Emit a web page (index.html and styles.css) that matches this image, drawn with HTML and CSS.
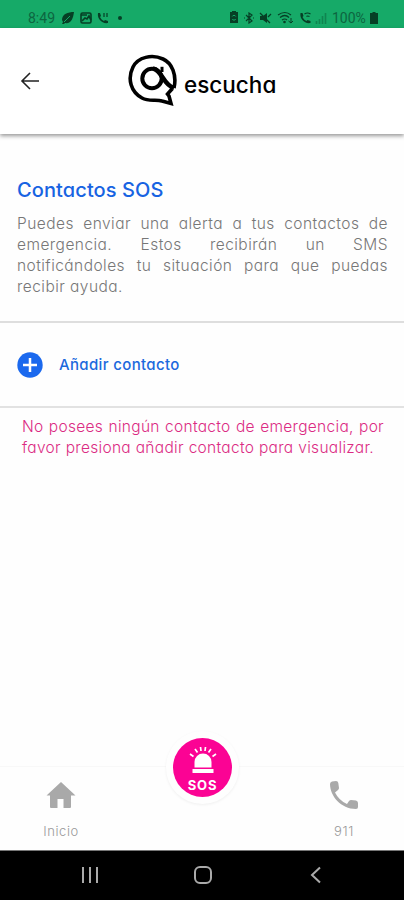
FILE: index.html
```html
<!DOCTYPE html>
<html lang="es">
<head>
  <meta charset="UTF-8">
  <meta name="viewport" content="width=device-width, initial-scale=1.0">
  <title>Contactos SOS</title>
  <link rel="stylesheet" href="styles.css">
</head>
<body>
  <div class="screen">
    <!-- Status bar -->
    <div class="status-bar">
      <div class="status-left">
        <span class="time">8:49</span>
        <svg width="14" height="14" viewBox="0 0 14 14"><path d="M13 1C7 1 1 3 1 9l1 2-1 2h2l1-1c6 1 8-4 9-11z" fill="currentColor"/><path d="M3 11L9 5" stroke="#13a866"/></svg>
        <svg width="12" height="12" viewBox="0 0 12 12"><rect x="1" y="1" width="10" height="10" rx="1.5" fill="none" stroke="currentColor" stroke-width="1.6"/><path d="M1 3h6M2 9l3-3 2 1 2-3 2 4" fill="none" stroke="currentColor" stroke-width="1.7"/></svg>
        <svg width="12" height="12" viewBox="0 0 12 12"><path d="M1 1h2l1 3-1 1c1 2 2 3 4 4l1-1 3 1v2C5 12 0 7 1 1z" fill="currentColor"/><path d="M7 1v4M10 1v4" stroke="currentColor" stroke-width="1.2"/></svg>
        <span class="dot"></span>
      </div>
      <div class="status-right">
        <svg width="10" height="13" viewBox="0 0 10 13"><path d="M3 0h4v1h2v11H1V1h2z" fill="currentColor"/><path d="M3.200 5.500a2 2 0 0 1 3.600 0M6.800 8a2 2 0 0 1-3.600 0" fill="none" stroke="#13a866"/></svg>
        <svg width="10" height="12" viewBox="0 0 10 12"><path d="M2 3l6 6-3 2V1l3 2-6 6M0 6h1M9 6h1" fill="none" stroke="currentColor" stroke-width="1.2"/></svg>
        <svg width="13" height="12" viewBox="0 0 13 12"><path d="M1 4h3l4-3v10L4 8H1z" fill="currentColor"/><path d="M1 1l10 10M9 5l3-3" stroke="currentColor" stroke-width="1.3"/></svg>
        <svg width="17" height="13" viewBox="0 0 17 13"><path d="M1 4q7-5 13 0M3 6.500q5-4 9 0M5 9q3-2 5 0" fill="none" stroke="currentColor" stroke-width="1.200"/><circle cx="7.500" cy="11" r="1.300" fill="currentColor"/><path d="M14 7v5M11.500 10l2.500 2 2-2" fill="none" stroke="currentColor"/></svg>
        <svg width="13" height="12" viewBox="0 0 12 12"><path d="M1 1h2l1 3-1 1c1 2 2 3 4 4l1-1 3 1v2C5 12 0 7 1 1z" fill="currentColor"/><path d="M5 2q3-2 6 0M7 4.500q1-1 3 0" fill="none" stroke="currentColor" stroke-width="1.2"/></svg>
        <svg class="signal" width="12" height="12" viewBox="0 0 12 12"><path d="M1.500 12V9M4.500 12V7M7.500 12V4M10.500 12V1" stroke="currentColor" stroke-width="1.600"/></svg>
        <span class="battery">100%</span>
        <svg width="8" height="12" viewBox="0 0 8 12"><path d="M2.500 0h3v1H8v11H0V1h2.500z" fill="currentColor"/></svg>
      </div>
    </div>

    <!-- Header -->
    <div class="header">
      <svg class="back" width="20" height="20" viewBox="0 0 20 20"><path d="M10 2L2 10l8 8M2 10h17" fill="none" stroke="#222" stroke-width="1.6"/></svg>
      <div class="logo">
        <svg width="50" height="54" viewBox="0 0 50 54" fill="none" stroke="#000">
          <path d="M46 34C49 21 44 9 35 5C24 0 10 3 5 13C-1 25 3 38 14 44C21 48 28 45 34 47L43 49.500L41 42L39.500 40L44 35" stroke-width="3.600"/>
          <circle cx="24" cy="24.500" r="9.700" stroke-width="4"/>
          <path d="M25 14.500C34 16 35 31 46 34" stroke-width="4.500"/>
          <path d="M34 12.800V18" stroke-width="3"/>
        </svg>
        <span class="logo-text">escucha</span>
      </div>
    </div>

    <!-- Contacts -->
    <div class="intro">
      <h1>Contactos SOS</h1>
      <p>Puedes enviar una alerta a tus contactos de emergencia. Estos recibirán un SMS notificándoles tu situación para que puedas recibir ayuda.</p>
    </div>
    <div class="add-contact">
      <svg width="26" height="26" viewBox="0 0 26 26"><circle cx="13" cy="13" r="12.700" fill="#1b69ee"/><path d="M13 6v14M6 13h14" stroke="#fff" stroke-width="2.500"/></svg>
      <span>Añadir contacto</span>
    </div>
    <p class="empty">
      <span class="line">No posees ningún contacto de emergencia, por</span>
      <span class="line line-short">favor presiona añadir contacto para visualizar.</span>
    </p>

    <!-- Bottom tabs -->
    <div class="tabs">
      <div class="tab">
        <svg width="30" height="28" viewBox="0 0 30 28"><path d="M15 1L.500 14.500H4V26q0 1 1 1h6.500v-9h6v9H24q1 0 1-1V14.500h4.500z" fill="#a9a9a9"/></svg>
        <span>Inicio</span>
      </div>
      <div class="sos">
        <svg width="30" height="28" viewBox="0 0 30 28"><path d="M6.500 20.500V15a8.500 8.500 0 0 1 17 0v5.500z" fill="#fff"/><path d="M4.500 22h21v4h-21z" fill="#fff"/><path d="M2 7l3.500 2.500M7 2l2.500 3.500M12.500 0l.5 4M17.500 0L17 4M23 2l-2.500 3.500M28 7l-3.500 2.500" stroke="#fff" stroke-width="1.700"/></svg>
        <span>SOS</span>
      </div>
      <div class="tab">
        <svg width="28" height="28" viewBox="0 0 28 28"><path d="M2 .500L6 0q2 0 2.300 2L9 7q0 1-1 2l-3 2.500q4 8 12 11.500l2-3q1-1 2-1l5 .5q2 .500 2 2.500v4q0 2-2 2C11 28 0 15 0 3Q0 1 2 .500z" fill="#a9a9a9"/></svg>
        <span>911</span>
      </div>
    </div>

    <!-- System navigation -->
    <div class="nav-bar">
      <svg width="18" height="18" viewBox="0 0 18 18"><path d="M2 1v16M9 1v16M16 1v16" stroke="#aaa" stroke-width="2"/></svg>
      <svg width="18" height="18" viewBox="0 0 18 18"><rect x="1" y="1" width="16" height="16" rx="5" fill="none" stroke="#aaa" stroke-width="2"/></svg>
      <svg width="18" height="18" viewBox="0 0 18 18"><path d="M13 1.500L5 9l8 7.500" fill="none" stroke="#aaa" stroke-width="2"/></svg>
    </div>
  </div>
</body>
</html>
```
FILE: styles.css
```css
* {
  box-sizing: border-box;
}

body {
  margin: 0;
  font-family: Inter, "Open Sans", sans-serif;
  font-feature-settings: "cv11";
  background-color: #fefefe;
}

h1, p {
  margin: 0;
}

svg {
  display: block;
  flex-shrink: 0;
}

.screen {
  display: flex;
  flex-direction: column;
  height: 900px;
  overflow: hidden;
}

/* Status bar */
.status-bar {
  display: flex;
  justify-content: space-between;
  height: 28px;
  padding: 7px 26px 0 28px;
  background-color: #16aa68;
  color: #063f25;
  font-family: Roboto, sans-serif;
  font-size: 14px;
}

.status-left, .status-right {
  display: flex;
  align-items: center;
  height: 21px;
}

.status-left {
  gap: 5px;
}

.status-right {
  gap: 5px;
}

.time {
  width: 28px;
  color: #0d6540;
}

.dot {
  width: 4px;
  height: 4px;
  margin-left: 4px;
  border-radius: 50%;
  background-color: #063f25;
}

.signal {
  margin-left: -2px;
  opacity: 0.35;
}

.battery {
  width: 36px;
  margin-right: -3px;
  color: #0d6540;
}

/* Header */
.header {
  display: flex;
  height: 106px;
  padding-left: 20px;
  background-color: #fff;
  box-shadow: 0 2px 4px rgba(0, 0, 0, 0.4);
}

.back {
  margin-top: 43px;
}

.logo {
  display: flex;
  margin: 26px 0 0 88px;
}

.logo-text {
  margin: 17px 0 0 6px;
  font-size: 22.5px;
  font-weight: 500;
  line-height: 28px;
}

/* Contacts */
.intro {
  height: 189px;
  padding: 43px 16px 0 17px;
  border-bottom: 2px solid #dedede;
}

.intro h1 {
  font-size: 20px;
  font-weight: 500;
  line-height: 26px;
  letter-spacing: 0.1px;
  color: #1763e2;
}

.intro p {
  margin-top: 10px;
  font-size: 15.5px;
  font-weight: 300;
  line-height: 21px;
  letter-spacing: 0.45px;
  text-align: justify;
  color: #777;
}

.add-contact {
  display: flex;
  align-items: center;
  gap: 16px;
  height: 85px;
  padding-left: 17px;
  border-bottom: 2px solid #e2e2e2;
  font-size: 15px;
  font-weight: 500;
  letter-spacing: 0.35px;
  color: #1b69dd;
}

.empty {
  padding: 8px 20px 0 22px;
  font-size: 15.5px;
  font-weight: 300;
  line-height: 21px;
  letter-spacing: 0.3px;
  color: #db2b83;
}

.line {
  display: block;
  white-space: nowrap;
  text-align-last: justify;
}

.line-short {
  width: 352px;
}

/* Bottom tabs */
.tabs {
  display: flex;
  justify-content: space-between;
  height: 84px;
  margin-top: auto;
  padding: 0 30px 0 31px;
  border-top: 1px solid #f8f8f8;
}

.tab {
  display: flex;
  flex-direction: column;
  align-items: center;
  width: 60px;
  padding-top: 14px;
  font-size: 13px;
  font-weight: 300;
  line-height: 18px;
  letter-spacing: 0.6px;
  color: #999;
}

.tab span {
  margin-top: 13px;
}

.sos {
  display: flex;
  flex-direction: column;
  align-items: center;
  width: 59px;
  height: 59px;
  margin-top: -29px;
  padding-top: 9px;
  border-radius: 50%;
  background-color: #fb0394;
  box-shadow: 0 0 0 7px #fefefe, 0 1px 3px 7px rgba(0, 0, 0, 0.06);
  color: #fff;
  font-size: 13px;
  font-weight: 700;
  line-height: 16px;
  letter-spacing: 0.8px;
}

.sos span {
  margin-top: 2px;
}

/* System navigation */
.nav-bar {
  display: flex;
  justify-content: space-between;
  align-items: center;
  height: 50px;
  padding: 0 79px 2px 81px;
  border-top: 1px solid #777;
  background-color: #000;
}
```
